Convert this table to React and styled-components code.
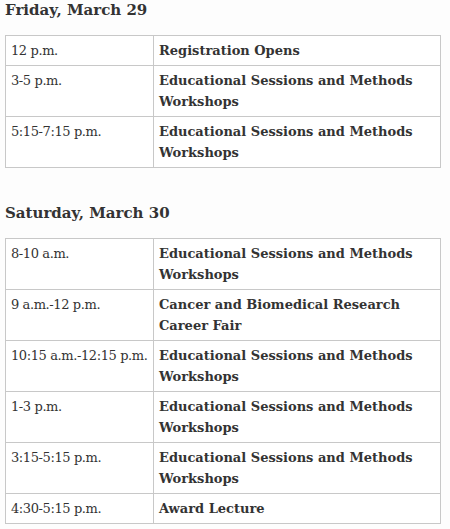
import React from 'react';
import styled, { createGlobalStyle } from 'styled-components';

const GlobalStyle = createGlobalStyle`
  body {
    margin: 0;
    background: #fdfdfd;
    font-family: "DejaVu Serif", Georgia, serif;
    color: #333;
  }
`;

const Page = styled.div`
  padding: 0 0 0 5px;
`;

const DayTitle = styled.h3`
  margin: 0;
  padding-top: ${(p) => p.$top}px;
  font-size: 15px;
  line-height: 20px;
  font-weight: bold;
  color: #333;
`;

const Table = styled.table`
  width: 436px;
  table-layout: fixed;
  border-collapse: collapse;
  margin-top: 15px;
  background: #fff;
`;

const Td = styled.td`
  border: 1px solid #c8c8c8;
  padding: 4px 5px;
  font-size: 13px;
  line-height: 21px;
  vertical-align: top;
  width: ${(p) => (p.$time ? '137px' : 'auto')};
  font-weight: ${(p) => (p.$time ? 'normal' : 'bold')};
  letter-spacing: ${(p) => (p.$time ? '-0.4px' : 'normal')};
  white-space: ${(p) => (p.$time ? 'nowrap' : 'normal')};
  color: #333;
`;

const days = [
  {
    title: 'Friday, March 29',
    top: 0,
    rows: [
      ['12 p.m.', 'Registration Opens'],
      ['3-5 p.m.', 'Educational Sessions and Methods Workshops'],
      ['5:15-7:15 p.m.', 'Educational Sessions and Methods Workshops'],
    ],
  },
  {
    title: 'Saturday, March 30',
    top: 35,
    rows: [
      ['8-10 a.m.', 'Educational Sessions and Methods Workshops'],
      ['9 a.m.-12 p.m.', 'Cancer and Biomedical Research Career Fair'],
      ['10:15 a.m.-12:15 p.m.', 'Educational Sessions and Methods Workshops'],
      ['1-3 p.m.', 'Educational Sessions and Methods Workshops'],
      ['3:15-5:15 p.m.', 'Educational Sessions and Methods Workshops'],
      ['4:30-5:15 p.m.', 'Award Lecture'],
    ],
  },
];

export default function App() {
  return (
    <Page>
      <GlobalStyle />
      {days.map((day) => (
        <section key={day.title}>
          <DayTitle $top={day.top}>{day.title}</DayTitle>
          <Table>
            <tbody>
              {day.rows.map(([time, what]) => (
                <tr key={time}>
                  <Td $time>{time}</Td>
                  <Td>{what}</Td>
                </tr>
              ))}
            </tbody>
          </Table>
        </section>
      ))}
    </Page>
  );
}
